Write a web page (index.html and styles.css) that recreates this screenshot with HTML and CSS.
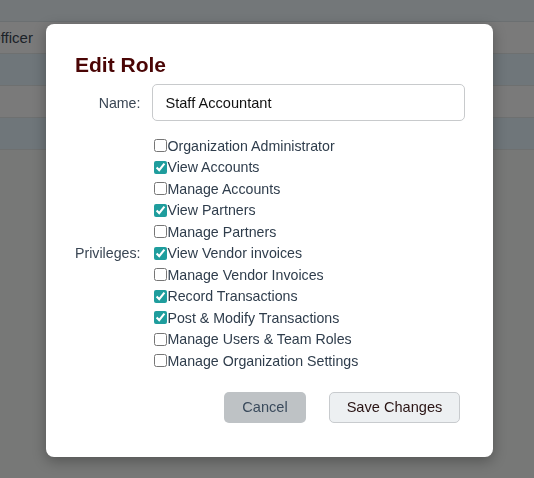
FILE: index.html
```html
<!DOCTYPE html>
<html lang="en">
<head>
  <meta charset="UTF-8" />
  <meta name="viewport" content="width=device-width, initial-scale=1.0" />
  <title>Team Roles</title>
  <link rel="stylesheet" href="styles.css">
</head>
<body>
  <table class="roles">
    <tr class="head"><td></td></tr>
    <tr><td><span class="cut">Officer</span></td></tr>
    <tr class="alt"><td></td></tr>
    <tr><td></td></tr>
    <tr class="alt"><td></td></tr>
  </table>

  <div class="modal">
    <h2>Edit Role</h2>
    <div class="form-grid">
      <label class="field-label" for="roleName">Name:</label>
      <input type="text" id="roleName" class="name-input" value="Staff Accountant" />

      <div class="field-label">Privileges:</div>
      <div class="privileges">
        <label><input type="checkbox" />Organization Administrator</label>
        <label><input type="checkbox" checked />View Accounts</label>
        <label><input type="checkbox" />Manage Accounts</label>
        <label><input type="checkbox" checked />View Partners</label>
        <label><input type="checkbox" />Manage Partners</label>
        <label><input type="checkbox" checked />View Vendor invoices</label>
        <label><input type="checkbox" />Manage Vendor Invoices</label>
        <label><input type="checkbox" checked />Record Transactions</label>
        <label><input type="checkbox" checked />Post &amp; Modify Transactions</label>
        <label><input type="checkbox" />Manage Users &amp; Team Roles</label>
        <label><input type="checkbox" />Manage Organization Settings</label>
      </div>
    </div>
    <div class="actions">
      <button class="btn-cancel">Cancel</button>
      <button class="btn-save">Save Changes</button>
    </div>
  </div>
</body>
</html>
```
FILE: styles.css
```css
/* page behind the dialog, already dimmed */
html {
  background-color: #777877;
}
body {
  margin: 0;
  font-family: "Liberation Sans", Arial, sans-serif;
  color: #2f3d4c;
}
.roles {
  width: 100%;
  border-collapse: collapse;
  font-size: 15px;
}
.roles td {
  height: 31px;
  padding: 0;
  border-bottom: 1px solid #6e7070;
  background-color: #7a7a7a;
  color: #1b2228;
}
.roles .head td {
  height: 21px;
  background-color: #737779;
  border-bottom-color: #6b6f71;
}
.roles .alt td {
  background-color: #6f767a;
}
.cut {
  margin-left: -11px;
}
.modal {
  position: fixed;
  top: 24px;
  left: 46px;
  width: 447px;
  height: 433px;
  box-sizing: border-box;
  padding: 29px 28px 0 29px;
  background-color: #fff;
  border-radius: 8px;
  box-shadow: 0 4px 14px rgba(0, 0, 0, 0.3);
}
h2 {
  margin: 0 0 7px;
  font-size: 21px;
  line-height: 24px;
  color: #4a0505;
}
.form-grid {
  display: grid;
  grid-template-columns: auto 1fr;
  column-gap: 12px;
  row-gap: 14px;
  align-items: center;
  font-size: 14.2px;
}
.field-label {
  text-align: right;
  color: #3a4654;
}
.name-input {
  height: 37px;
  box-sizing: border-box;
  padding: 0 12px;
  border: 1px solid #c8cacc;
  border-radius: 5px;
  font-family: inherit;
  font-size: 14.6px;
  color: #111;
}
.privileges label {
  display: flex;
  align-items: center;
  height: 21.5px;
  color: #2f3d4c;
}
.privileges input {
  width: 13px;
  height: 13px;
  margin: 0 0 0 2px;
  accent-color: #1f9d9d;
}
.actions {
  display: flex;
  justify-content: flex-end;
  gap: 23px;
  margin: 20px 5px 0 0;
}
.actions button {
  height: 31px;
  border-radius: 5px;
  font-family: inherit;
  font-size: 14.6px;
  cursor: pointer;
}
.btn-cancel {
  width: 82px;
  background-color: #bec2c5;
  border: none;
  color: #3a4a5c;
}
.btn-save {
  width: 131px;
  background-color: #edf0f2;
  border: 1px solid #c8cbce;
  color: #2a1414;
}
```
